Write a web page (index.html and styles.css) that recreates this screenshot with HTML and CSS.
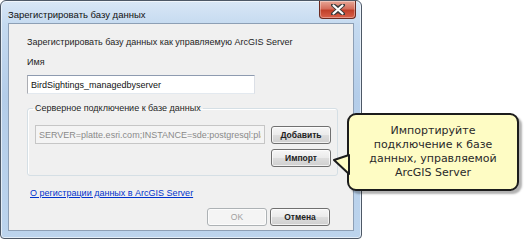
FILE: index.html
```html
<!DOCTYPE html>
<html lang="ru">
<head>
  <meta charset="UTF-8">
  <title>Зарегистрировать базу данных</title>
  <link rel="stylesheet" href="styles.css">
</head>
<body>
  <div class="window">
    <div class="titlebar">
      <span class="title">Зарегистрировать базу данных</span>
      <button class="close" aria-label="Закрыть">
        <svg width="14" height="11" viewBox="0 0 14 11">
          <path d="M2 1 L7 4.5 L12 1 M2 10 L7 6.5 L12 10 M2 1 L12 10 M12 1 L2 10" stroke="#3a3a3a" stroke-width="4" stroke-linecap="round" fill="none"/>
          <path d="M2.5 1.5 L11.5 9.5 M11.5 1.5 L2.5 9.5" stroke="#fff" stroke-width="2.2" stroke-linecap="round" fill="none"/>
        </svg>
      </button>
    </div>
    <div class="client">
      <p class="intro">Зарегистрировать базу данных как управляемую ArcGIS Server</p>
      <label class="label" for="name">Имя</label>
      <input id="name" class="field name" value="BirdSightings_managedbyserver">
      <fieldset class="group">
        <legend>Серверное подключение к базе данных</legend>
        <div class="conn-row">
          <input class="field conn" disabled value="SERVER=platte.esri.com;INSTANCE=sde:postgresql:platte;DBCLIENT=postgresql">
          <div class="side-buttons">
            <button class="btn">Добавить</button>
            <button class="btn">Импорт</button>
          </div>
        </div>
      </fieldset>
      <a class="help" href="#">О регистрации данных в ArcGIS Server</a>
      <div class="actions">
        <button class="btn" disabled>OK</button>
        <button class="btn">Отмена</button>
      </div>
    </div>
  </div>

  <div class="callout">
    <svg class="tail" width="18" height="26" viewBox="0 0 18 26">
      <polygon points="16,3 1,8 16,22" fill="#fefcc4" stroke="#1c1c1c" stroke-width="2" stroke-linejoin="round"/>
    </svg>
    <p>Импортируйте подключение к базе данных, управляемой ArcGIS Server</p>
  </div>
</body>
</html>
```

FILE: styles.css
```css
body {
  margin: 0;
  background: #fff;
  font-family: "Liberation Sans", Arial, sans-serif;
  font-size: 9px;
  color: #1e1e1e;
}
.window {
  width: 362px;
  height: 239px;
  border: 1px solid #4d5866;
  border-radius: 6px 6px 4px 4px;
  background: linear-gradient(to bottom, #d9e7f6 0%, #c5daf0 10%, #b4cde9 40%, #bcd4ed 100%);
  box-shadow: inset 0 0 0 1px rgba(255,255,255,0.6);
  padding: 0 7px 7px;
  box-sizing: border-box;
  display: flex;
  flex-direction: column;
}
.titlebar {
  height: 22px;
  display: flex;
  align-items: flex-start;
  justify-content: space-between;
}
.title {
  font-size: 9.5px;
  color: #111;
  margin-top: 8px;
}
.close {
  width: 37px;
  height: 18px;
  margin-right: -2px;
  border: 1px solid #6b2a20;
  border-top: none;
  border-radius: 0 0 4px 4px;
  background: linear-gradient(to bottom, #e7a796 0%, #d46e5c 45%, #c1402a 55%, #d9614a 100%);
  box-shadow: inset 0 0 0 1px rgba(255,255,255,0.35);
  padding: 0;
  display: flex;
  align-items: center;
  justify-content: center;
}
.client {
  flex: 1;
  background: #f0f0f0;
  border: 1px solid #8d9fb5;
  padding: 11px 0 0 18px;
  display: flex;
  flex-direction: column;
  align-items: flex-start;
}
.intro {
  margin: 0;
  line-height: 14px;
}
.label {
  margin-top: 6px;
  line-height: 14px;
}
.field {
  font-family: "Liberation Sans", Arial, sans-serif;
  font-size: 9px;
  box-sizing: border-box;
  height: 19px;
  padding: 0 3px;
  margin: 0;
  border: 1px solid #abadb3;
  border-top-color: #8e9bb0;
  border-right-color: #dbdfe6;
  border-bottom-color: #e3e9ef;
  background: #fff;
  color: #111;
  outline: none;
}
.name {
  margin-top: 6px;
  width: 228px;
}
.group {
  margin: 7px 0 0;
  width: 311px;
  box-sizing: border-box;
  padding: 0 0 8px 7px;
  border: 1px solid #d5dfe5;
  border-radius: 3px;
  box-shadow: inset 1px 1px 0 #fff;
}
.group legend {
  padding: 0 2px;
  margin-left: -2px;
  line-height: 14px;
  color: #1e1e1e;
}
.conn-row {
  display: flex;
  gap: 6px;
  margin-top: 10px;
}
.conn {
  width: 230px;
  background: #f4f4f4;
  color: #8a8a8a;
  border-color: #c6c6c6;
}
.side-buttons {
  display: flex;
  flex-direction: column;
  gap: 5px;
  margin-top: 1px;
}
.btn {
  font-family: "Liberation Sans", Arial, sans-serif;
  font-size: 8.5px;
  font-weight: bold;
  color: #222;
  width: 60px;
  height: 18px;
  padding: 0;
  border: 1px solid #707070;
  border-radius: 3px;
  background: linear-gradient(to bottom, #f6f6f6 0%, #ebebeb 48%, #dddddd 52%, #cfcfcf 100%);
  box-shadow: inset 0 0 0 1px rgba(255,255,255,0.7);
}
.btn:disabled {
  font-weight: normal;
  color: #a0a0a0;
  border-color: #adb2b5;
  background: #f4f4f4;
}
.help {
  margin: 10px 0 0 3px;
  line-height: 14px;
  color: #0033cc;
}
.actions {
  width: 311px;
  display: flex;
  justify-content: flex-end;
  gap: 3px;
  padding-right: 8px;
  box-sizing: border-box;
  margin-top: 8px;
}
.callout {
  position: absolute;
  left: 347px;
  top: 113px;
  width: 172px;
  height: 78px;
  box-sizing: border-box;
  border: 2px solid #1c1c1c;
  border-radius: 9px;
  background: #fefcc4;
  box-shadow: 3px 3px 2px rgba(0,0,0,0.3);
  display: flex;
  align-items: center;
  justify-content: center;
}
.callout p {
  margin: 0;
  padding: 0 14px;
  font-family: "DejaVu Sans", Tahoma, sans-serif;
  font-size: 11px;
  line-height: 14px;
  text-align: center;
  color: #2a2a2a;
}
.tail {
  position: absolute;
  left: -16px;
  top: 37px;
}
```
